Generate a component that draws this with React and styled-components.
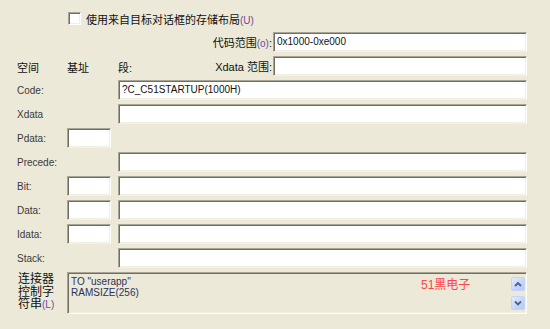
import React from "react";
import styled, { createGlobalStyle } from "styled-components";

const Global = createGlobalStyle`
  html, body { margin: 0; padding: 0; background: #ECE9D8; }
  body { font-family: "Liberation Sans", "Noto Sans CJK SC", sans-serif; }
`;

const Page = styled.div`
  width: 550px;
  height: 329px;
  box-sizing: border-box;
  padding: 12px 23px 0 17px;
  background: #ECE9D8;
  overflow: hidden;
`;

const CheckRow = styled.label`
  display: flex;
  align-items: center;
  gap: 5px;
  margin-left: 51px;
  height: 13px;
  font-size: 11px;
  color: #111;
`;

const CheckBox = styled.span`
  width: 13px;
  height: 13px;
  box-sizing: border-box;
  background: #fff;
  border-top: 1px solid #a7a495;
  border-left: 1px solid #a7a495;
  border-right: 1px solid #fff;
  border-bottom: 1px solid #fff;
  box-shadow: inset 1px 1px 0 #716f64, inset -1px -1px 0 #f1efe2;
`;

const Mnemonic = styled.span`
  font-size: 10px;
  color: #6a4a9c;
`;

const Grid = styled.div`
  display: grid;
  grid-template-columns: 50px 51px 155px 254px;
  grid-auto-rows: 20px;
  row-gap: 4px;
  margin-top: 7px;
`;

const RangeLabel = styled.div`
  grid-column: 1 / 4;
  justify-self: end;
  align-self: center;
  padding-right: 1px;
  font-size: 11px;
  color: #111;
  white-space: nowrap;
`;

const Head = styled.div`
  grid-column: ${(p) => p.$col};
  align-self: end;
  font-size: 11px;
  color: #111;
  padding-bottom: 1px;
`;

const HeadSeg = styled.div`
  grid-column: 3;
  display: flex;
  justify-content: space-between;
  align-items: center;
  padding-right: 1px;
  font-size: 11px;
  color: #111;
  white-space: nowrap;
`;

const SegTitle = styled.span`
  align-self: flex-end;
  padding-bottom: 1px;
`;

const Label = styled.div`
  grid-column: 1;
  align-self: center;
  font-size: 10px;
  color: #3a3a3a;
`;

const Field = styled.div`
  grid-column: ${(p) => p.$col};
  ${(p) => (p.$narrow ? "width: 44px;" : "")}
  height: 20px;
  box-sizing: border-box;
  background: #fff;
  border-top: 1px solid #a7a495;
  border-left: 1px solid #a7a495;
  border-right: 1px solid #fff;
  border-bottom: 1px solid #f4f2e8;
  box-shadow: inset 1px 1px 0 #716f64, inset -1px -1px 0 #f1efe2;
  padding-left: 3px;
  font-size: 10px;
  line-height: 18px;
  color: #111;
  white-space: nowrap;
  overflow: hidden;
`;

const LinkerLabel = styled.div`
  grid-column: 1;
  padding-top: 1px;
  padding-left: 1px;
  font-size: 12px;
  line-height: 12.5px;
  color: #111;
`;

const TextArea = styled.div`
  grid-column: 2 / 5;
  position: relative;
  height: 42px;
  box-sizing: border-box;
  background: #ECE9D8;
  border-top: 1px solid #a7a495;
  border-left: 1px solid #a7a495;
  border-right: 1px solid #fff;
  border-bottom: 1px solid #fff;
  box-shadow: inset 1px 1px 0 #716f64, inset -1px -1px 0 #f1efe2;
  display: flex;
  justify-content: space-between;
  padding: 3px 1px 2px 3px;
`;

const AreaText = styled.div`
  font-size: 10px;
  line-height: 11px;
  color: #2b3158;
  white-space: pre;
`;

const ScrollCol = styled.div`
  display: flex;
  flex-direction: column;
  justify-content: space-between;
  padding: 1px 0 1px;
`;

const ScrollBtn = styled.div`
  width: 14px;
  height: 14px;
  box-sizing: border-box;
  border: 1px solid #c3d3fd;
  border-radius: 2px;
  background: linear-gradient(135deg, #e3ebfd 0%, #c4d5fb 60%, #b5c8f5 100%);
  display: flex;
  align-items: center;
  justify-content: center;
`;

const Watermark = styled.div`
  position: absolute;
  left: 353px;
  top: 2px;
  font-size: 12px;
  color: #ff4545;
`;

const Chevron = ({ up }) => (
  <svg width="8" height="6" viewBox="0 0 8 6">
    <path
      d={up ? "M1 5 L4 2 L7 5" : "M1 1.5 L4 4.5 L7 1.5"}
      fill="none"
      stroke="#4d6185"
      strokeWidth="1.8"
    />
  </svg>
);

const rows = [
  { name: "Code:", base: false, seg: "?C_C51STARTUP(1000H)" },
  { name: "Xdata", base: false, seg: "" },
  { name: "Pdata:", base: true, noSeg: true },
  { name: "Precede:", base: false, seg: "" },
  { name: "Bit:", base: true, seg: "" },
  { name: "Data:", base: true, seg: "" },
  { name: "Idata:", base: true, seg: "" },
  { name: "Stack:", base: false, seg: "" },
];

export default function App() {
  return (
    <Page>
      <Global />
      <CheckRow>
        <CheckBox />
        <span>
          使用来自目标对话框的存储布局<Mnemonic>(U)</Mnemonic>
        </span>
      </CheckRow>
      <Grid>
        <RangeLabel>
          代码范围<Mnemonic>(o)</Mnemonic>:
        </RangeLabel>
        <Field $col={4}>0x1000-0xe000</Field>

        <Head $col={1}>空间</Head>
        <Head $col={2}>基址</Head>
        <HeadSeg>
          <SegTitle>段:</SegTitle>
          <span>Xdata 范围:</span>
        </HeadSeg>
        <Field $col={4} />

        {rows.map((r) => (
          <React.Fragment key={r.name}>
            <Label>{r.name}</Label>
            {r.base && <Field $col={2} $narrow />}
            {!r.noSeg && <Field $col="3 / 5">{r.seg}</Field>}
          </React.Fragment>
        ))}

        <LinkerLabel>
          连接器
          <br />
          控制字
          <br />
          符串<Mnemonic>(L)</Mnemonic>
        </LinkerLabel>
        <TextArea>
          <AreaText>{'TO "userapp"\nRAMSIZE(256)'}</AreaText>
          <Watermark>51黑电子</Watermark>
          <ScrollCol>
            <ScrollBtn>
              <Chevron up />
            </ScrollBtn>
            <ScrollBtn>
              <Chevron />
            </ScrollBtn>
          </ScrollCol>
        </TextArea>
      </Grid>
    </Page>
  );
}
